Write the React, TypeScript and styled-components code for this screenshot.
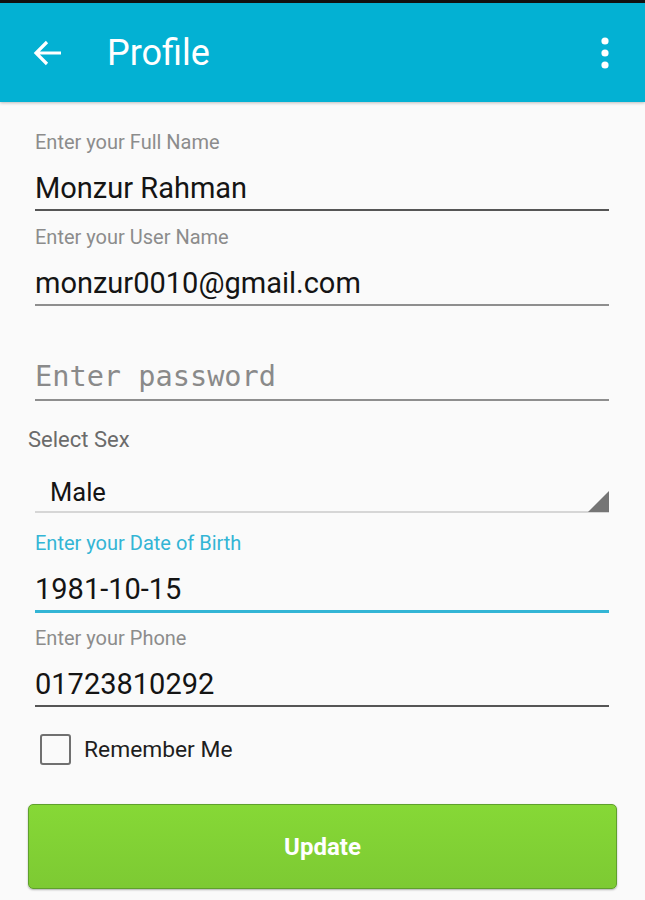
import React, { FC } from 'react';
import styled, { createGlobalStyle } from 'styled-components';

const GlobalStyle = createGlobalStyle`
  html, body {
    margin: 0;
    padding: 0;
    background: #fafafa;
    font-family: Roboto, "Noto Sans", sans-serif;
  }
`;

const Screen = styled.div`
  width: 645px;
  height: 900px;
  overflow: hidden;
  background: #fafafa;
  border-top: 3px solid #111;
  box-sizing: border-box;
`;

const AppBar = styled.header`
  height: 99px;
  background: #03b1d3;
  display: flex;
  align-items: center;
  padding: 0 35px 0 33px;
  box-shadow: 0 1px 3px rgba(0, 0, 0, 0.25);
  position: relative;
  z-index: 1;
`;

const Title = styled.h1`
  margin: 0 0 0 44px;
  flex: 1;
  color: #fff;
  font-size: 36px;
  font-weight: 400;
  line-height: 1;
`;

const IconButton = styled.button`
  background: none;
  border: none;
  padding: 0;
  display: flex;
  align-items: center;
  justify-content: center;
  cursor: pointer;
`;

const Form = styled.form`
  display: flex;
  flex-direction: column;
  padding: 29px 36px 0 35px;
`;

const Field = styled.div<{ $gap: number }>`
  display: flex;
  flex-direction: column;
  margin-top: ${(p) => p.$gap}px;
`;

const Label = styled.label<{ $active?: boolean }>`
  height: 22px;
  line-height: 22px;
  font-size: 20px;
  color: ${(p) => (p.$active ? '#33b5d5' : '#8c8c8c')};
`;

const ValueBox = styled.div<{ $line: string; $weight: number }>`
  padding-top: 15px;
  height: 41px;
  line-height: 41px;
  border-bottom: ${(p) => p.$weight}px solid ${(p) => p.$line};
  font-size: 29px;
  color: #141414;
  white-space: nowrap;
`;

const Placeholder = styled.span`
  display: block;
  line-height: 36px;
  font-family: "DejaVu Sans Mono", "Liberation Mono", monospace;
  font-size: 28.6px;
  color: #8a8a8a;
`;

const SpinnerLabel = styled.div`
  margin: 28px 0 0 -7px;
  height: 22px;
  line-height: 22px;
  font-size: 22px;
  color: #6b6b6b;
`;

const Spinner = styled.div`
  position: relative;
  height: 62px;
  padding: 0 0 4px 15px;
  display: flex;
  align-items: flex-end;
  border-bottom: 2px solid #d6d6d6;
  font-size: 25.5px;
  color: #141414;
  line-height: 30px;
  box-sizing: border-box;
`;

const Caret = styled.span`
  position: absolute;
  right: 0;
  bottom: -1px;
  width: 0;
  height: 0;
  border-style: solid;
  border-width: 0 0 21px 21px;
  border-color: transparent transparent #757575 transparent;
`;

const CheckRow = styled.label`
  display: flex;
  align-items: center;
  margin: 27px 0 0 5px;
  font-size: 22.8px;
  color: #1e1e1e;
  gap: 13px;
`;

const Box = styled.span`
  width: 27px;
  height: 27px;
  border: 2.5px solid #707070;
  border-radius: 3px;
  box-sizing: content-box;
`;

const UpdateButton = styled.button`
  margin: 39px 0 0 -7px;
  width: 589px;
  height: 85px;
  border: 1.5px solid #5fa02c;
  border-radius: 5px;
  background: linear-gradient(#86d836, #7dca33);
  color: #fff;
  font-family: Roboto, sans-serif;
  font-weight: 700;
  font-size: 24px;
  box-shadow: 0 1px 2px rgba(0, 0, 0, 0.3);
`;

interface IField {
  label: string;
  value?: string;
  placeholder?: string;
  gap: number;
  active?: boolean;
  line?: string;
}

const TextField: FC<IField> = ({ label, value, placeholder, gap, active, line }: IField) => (
  <Field $gap={gap}>
    <Label $active={active}>{label}</Label>
    <ValueBox $line={active ? '#33b5d5' : line || '#555'} $weight={active ? 3 : 2}>
      {value ? value : <Placeholder>{placeholder}</Placeholder>}
    </ValueBox>
  </Field>
);

const App: FC = () => {
  return (
    <Screen>
      <GlobalStyle />
      <AppBar>
        <IconButton aria-label="back">
          <svg width="30" height="28" viewBox="0 0 30 28">
            <path d="M28 14H4M14 3 3 14l11 11" stroke="#fff" strokeWidth="3.2" fill="none" />
          </svg>
        </IconButton>
        <Title>Profile</Title>
        <IconButton aria-label="more">
          <svg width="10" height="32" viewBox="0 0 10 32">
            <circle cx="5" cy="4" r="3.6" fill="#fff" />
            <circle cx="5" cy="16" r="3.6" fill="#fff" />
            <circle cx="5" cy="28" r="3.6" fill="#fff" />
          </svg>
        </IconButton>
      </AppBar>
      <Form>
        <TextField gap={0} label="Enter your Full Name" value="Monzur Rahman" />
        <TextField gap={15} label="Enter your User Name" value="monzur0010@gmail.com" line="#8e8e8e" />
        <TextField gap={15} label="" placeholder="Enter password" line="#8e8e8e" />
        <SpinnerLabel>Select Sex</SpinnerLabel>
        <Spinner>
          Male
          <Caret />
        </Spinner>
        <TextField gap={19} label="Enter your Date of Birth" value="1981-10-15" active />
        <TextField gap={14} label="Enter your Phone" value="01723810292" />
        <CheckRow>
          <Box />
          Remember Me
        </CheckRow>
        <UpdateButton type="button">Update</UpdateButton>
      </Form>
    </Screen>
  );
};

export default App;
